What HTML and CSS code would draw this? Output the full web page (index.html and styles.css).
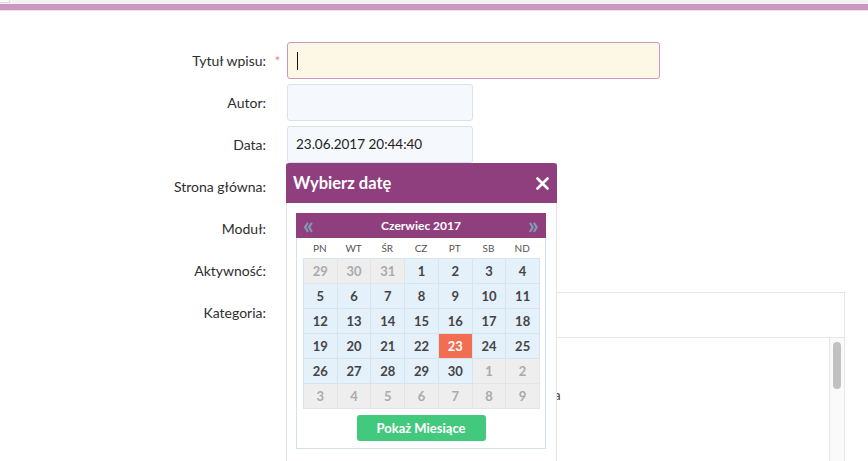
FILE: index.html
```html
<!DOCTYPE html>
<html>

<head>
    <meta charset="UTF-8">
    <title>Nowy wpis</title>
    <link rel="stylesheet" href="styles.css">
</head>

<body>
    <div class="topbar"><span class="topbar-tab"></span></div>
    <div class="accent"></div>

    <form class="entry-form">
        <label class="row-label">Tytuł wpisu:</label>
        <span class="req">*</span>
        <div class="field">
            <div class="input input-wide input-focus"><span class="caret"></span></div>
        </div>

        <label class="row-label">Autor:</label>
        <span class="req"></span>
        <div class="field">
            <div class="input input-short"></div>
        </div>

        <label class="row-label">Data:</label>
        <span class="req"></span>
        <div class="field">
            <div class="input input-short input-date">23.06.2017 20:44:40</div>
        </div>

        <label class="row-label">Strona główna:</label>
        <span class="req"></span>
        <div class="field"></div>

        <label class="row-label">Moduł:</label>
        <span class="req"></span>
        <div class="field"></div>

        <label class="row-label">Aktywność:</label>
        <span class="req"></span>
        <div class="field"></div>

        <label class="row-label">Kategoria:</label>
        <span class="req"></span>
        <div class="field">
            <div class="cat-panel">
                <div class="cat-top"></div>
                <div class="cat-body">
                    <ul class="cat-list">
                        <li class="cat-item">Strona główna</li>
                    </ul>
                    <div class="scroll-track"><span class="scroll-thumb"></span></div>
                </div>
            </div>
        </div>
    </form>

    <!-- date picker popup -->
    <div class="picker">
        <div class="picker-head">
            <span class="picker-title">Wybierz datę</span>
            <svg class="picker-close" width="13" height="13" viewBox="0 0 13 13">
                <path d="M1.5 1.5 L11.5 11.5 M11.5 1.5 L1.5 11.5" stroke="#fff" stroke-width="2.6" stroke-linecap="round" />
            </svg>
        </div>
        <div class="picker-body">
            <div class="cal">
                <div class="cal-bar">
                    <span class="cal-nav">&laquo;</span>
                    <span class="cal-month">Czerwiec 2017</span>
                    <span class="cal-nav">&raquo;</span>
                </div>
                <div class="cal-days">
                    <span>PN</span><span>WT</span><span>ŚR</span><span>CZ</span><span>PT</span><span>SB</span><span>ND</span>
                </div>
                <div class="cal-grid">
                    <span class="day other">29</span><span class="day other">30</span><span class="day other">31</span><span class="day">1</span><span class="day">2</span><span class="day">3</span><span class="day">4</span>
                    <span class="day">5</span><span class="day">6</span><span class="day">7</span><span class="day">8</span><span class="day">9</span><span class="day">10</span><span class="day">11</span>
                    <span class="day">12</span><span class="day">13</span><span class="day">14</span><span class="day">15</span><span class="day">16</span><span class="day">17</span><span class="day">18</span>
                    <span class="day">19</span><span class="day">20</span><span class="day">21</span><span class="day">22</span><span class="day today">23</span><span class="day">24</span><span class="day">25</span>
                    <span class="day">26</span><span class="day">27</span><span class="day">28</span><span class="day">29</span><span class="day">30</span><span class="day other">1</span><span class="day other">2</span>
                    <span class="day other">3</span><span class="day other">4</span><span class="day other">5</span><span class="day other">6</span><span class="day other">7</span><span class="day other">8</span><span class="day other">9</span>
                </div>
                <div class="cal-foot">
                    <button type="button" class="btn-months">Pokaż Miesiące</button>
                </div>
            </div>
        </div>
    </div>
</body>

</html>
```

FILE: styles.css
```css
body {
    margin: 0;
    background: #fff;
    color: #333;
    font-family: Lato, 'Open Sans', sans-serif;
    font-size: 14px;
    height: 461px;
    overflow: hidden;
}

.topbar {
    height: 4px;
    background: #f3f3f3;
}

.topbar-tab {
    display: block;
    width: 10px;
    height: 3px;
    background: #fafafa;
    border-right: 1px solid #dcdcdc;
    border-bottom: 1px solid #dcdcdc;
    box-sizing: border-box;
}

.accent {
    height: 6px;
    background: #c997c0;
    border-bottom: 1px solid #ece4eb;
}

.entry-form {
    display: grid;
    grid-template-columns: 266px 21px 1fr;
    grid-auto-rows: 37px;
    row-gap: 5px;
    padding-top: 31px;
}

.row-label {
    text-align: right;
    line-height: 37px;
    color: #2e2e2e;
}

.req {
    color: #f08a80;
    text-align: center;
    line-height: 37px;
    font-size: 14px;
    padding-left: 2px;
}

.field {
    position: relative;
}

.input {
    box-sizing: border-box;
    height: 37px;
    border: 1px solid #d5e2ee;
    border-radius: 3px;
    background: #f5f9fd;
    padding: 0 8px;
    line-height: 35px;
    font-size: 14px;
    color: #222;
}

.input-date {
    font-size: 13.5px;
}

.input-wide {
    width: 373px;
}

.input-short {
    width: 186px;
}

.input-focus {
    background: #fcf8e5;
    border-color: #cc98c2;
    position: relative;
}

.caret {
    position: absolute;
    left: 9px;
    top: 9px;
    width: 1px;
    height: 18px;
    background: #111;
}

.cat-panel {
    margin-top: -2px;
    width: 559px;
    margin-left: -1px;
    height: 200px;
    border: 1px solid #e6e6e6;
    box-sizing: border-box;
}

.cat-top {
    height: 44px;
    border-bottom: 1px solid #e6e6e6;
}

.cat-body {
    display: flex;
    height: 160px;
}

.cat-list {
    flex: 1;
    list-style: none;
    margin: 0;
    padding: 48px 0 0 185px;
}

.cat-item {
    font-size: 14px;
    color: #444;
}

.scroll-track {
    width: 14px;
    border-left: 1px solid #e6e6e6;
    background: #fafafa;
    padding-top: 4px;
}

.scroll-thumb {
    display: block;
    width: 8px;
    height: 47px;
    margin-left: 3px;
    background: #c1c1c1;
    border-radius: 4px;
}

/* date picker popup */

.picker {
    position: absolute;
    left: 286px;
    top: 163px;
    width: 271px;
    height: 330px;
    background: #fff;
    border-left: 1px solid #e3e3e3;
    border-right: 1px solid #e3e3e3;
    box-sizing: border-box;
}

.picker-head {
    display: flex;
    align-items: center;
    justify-content: space-between;
    height: 40px;
    margin: 0 -1px;
    padding: 0 8px 0 7px;
    background: #8f3e7e;
    color: #fff;
    border-radius: 3px 3px 0 0;
}

.picker-title {
    font-size: 16.5px;
    font-weight: bold;
}

.picker-body {
    padding: 10px 10px 0 9px;
}

.cal {
    border: 1px solid #d3e0ec;
    padding-bottom: 7px;
}

.cal-bar {
    display: flex;
    align-items: center;
    justify-content: space-between;
    height: 25px;
    margin: -1px -1px 0;
    padding: 0 7px;
    background: #8f3e7e;
    color: #fff;
}

.cal-month {
    font-size: 12px;
    font-weight: bold;
}

.cal-nav {
    color: #8199b3;
    font-size: 24px;
    font-weight: bold;
    line-height: 25px;
    margin-top: -3px;
}

.cal-days {
    display: grid;
    grid-template-columns: repeat(7, 1fr);
    height: 20px;
    line-height: 20px;
    margin: 0 6px;
    font-size: 10px;
    color: #555;
    text-align: center;
}

.cal-grid {
    display: grid;
    grid-template-columns: repeat(7, 1fr);
    grid-auto-rows: 25px;
    margin: 0 5px 0 6px;
    border-top: 1px solid #d6e4ef;
    border-left: 1px solid #d6e4ef;
}

.day {
    display: flex;
    align-items: center;
    justify-content: center;
    background: #e4f0fa;
    border-right: 1px solid #d6e4ef;
    border-bottom: 1px solid #d6e4ef;
    color: #444;
    font-size: 13px;
    font-weight: bold;
}

.day.other {
    background: #eeeeee;
    border-color: #e4e4e4;
    color: #aaa;
}

.day.today {
    background: #f26e52;
    color: #fff;
}

.cal-foot {
    display: flex;
    justify-content: center;
    padding-top: 6px;
}

.btn-months {
    width: 129px;
    height: 26px;
    border: none;
    border-radius: 3px;
    background: #43c97e;
    color: #fff;
    font-family: Lato, 'Open Sans', sans-serif;
    font-size: 13px;
    font-weight: bold;
}
```
